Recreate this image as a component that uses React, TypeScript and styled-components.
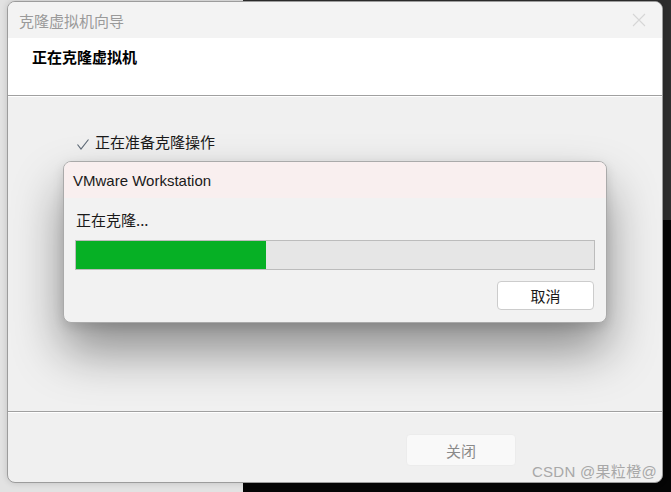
import React from 'react';
import styled, {createGlobalStyle} from "styled-components";

const GlobalStyle = createGlobalStyle`
    html, body {
        margin: 0;
        height: 100%;
    }
    body {
        background:
            linear-gradient(to right, #e2e2e2 0 243px, transparent 243px),
            linear-gradient(to bottom, #2d2d2d 0 220px, #050505 220px);
        font-family: "Liberation Sans", "Noto Sans CJK SC", sans-serif;
        overflow: hidden;
    }
`

const progress = 0.366;

export default function App() {
    return (
        <>
            <GlobalStyle/>
            <Desktop>
                <Wizard>
                    <TitleBar>
                        <TitleText>克隆虚拟机向导</TitleText>
                        <CloseIcon width="14" height="14" viewBox="0 0 14 14">
                            <path d="M1 1 L13 13 M13 1 L1 13" stroke="#d6d6d6" strokeWidth="1.1" fill="none"/>
                        </CloseIcon>
                    </TitleBar>
                    <Header>
                        <HeaderTitle>正在克隆虚拟机</HeaderTitle>
                    </Header>
                    <Body>
                        <StepList>
                            <Step>
                                <svg width="14" height="14" viewBox="0 0 14 14">
                                    <path d="M1.5 7.5 L5 12 L12.5 2.5" stroke="#5f6b78" strokeWidth="1.2" fill="none"/>
                                </svg>
                                <StepText>正在准备克隆操作</StepText>
                            </Step>
                        </StepList>
                    </Body>
                    <Footer>
                        <FooterButton disabled>关闭</FooterButton>
                    </Footer>
                    <Dialog>
                        <DialogTitle>VMware Workstation</DialogTitle>
                        <DialogBody>
                            <Status>正在克隆...</Status>
                            <ProgressTrack>
                                <ProgressFill style={{width: `${progress * 100}%`}}/>
                            </ProgressTrack>
                            <DialogActions>
                                <CancelButton>取消</CancelButton>
                            </DialogActions>
                        </DialogBody>
                    </Dialog>
                    <Watermark>CSDN @果粒橙@</Watermark>
                </Wizard>
            </Desktop>
        </>
    );
}

const Desktop = styled.div`
    padding: 1px 0 0 7px;
`

const Wizard = styled.div`
    position: relative;
    box-sizing: border-box;
    width: 656px;
    height: 482px;
    border: 1px solid #9c9c9c;
    border-radius: 8px;
    background: #f0f0f0;
    display: flex;
    flex-direction: column;
    overflow: hidden;
    box-shadow: 0 0 6px rgba(0, 0, 0, 0.15);
`

const TitleBar = styled.div`
    height: 36px;
    flex-shrink: 0;
    background: #f3f3f3;
    display: flex;
    align-items: center;
    justify-content: space-between;
    padding: 0 16px 0 11px;
`

const TitleText = styled.span`
    font-size: 15px;
    color: #9a9a9a;
    font-family: "Noto Sans CJK SC", sans-serif;
`

const CloseIcon = styled.svg`
    display: block;
`

const Header = styled.div`
    height: 58px;
    flex-shrink: 0;
    background: #fff;
    border-bottom: 1px solid #a0a0a0;
    box-shadow: 0 1px 0 #ffffff;
    padding: 8px 0 0 24px;
    box-sizing: border-box;
`

const HeaderTitle = styled.h1`
    margin: 0;
    font-size: 15px;
    line-height: 22px;
    font-weight: 700;
    color: #000;
    font-family: "Noto Sans CJK SC", sans-serif;
`

const Body = styled.div`
    flex: 1;
    padding: 34px 0 0 68px;
    margin-top: 1px;
`

const StepList = styled.ul`
    list-style: none;
    margin: 0;
    padding: 0;
`

const Step = styled.li`
    display: flex;
    align-items: center;
    gap: 5px;
    height: 20px;

    svg {
        margin-top: 5px;
    }
`

const StepText = styled.span`
    font-size: 15px;
    color: #1a1a1a;
    font-family: "Noto Sans CJK SC", sans-serif;
`

const Footer = styled.div`
    height: 71px;
    flex-shrink: 0;
    box-sizing: border-box;
    border-top: 1px solid #a0a0a0;
    box-shadow: inset 0 1px 0 #ffffff;
    display: flex;
    justify-content: flex-end;
    padding: 22px 146px 0 0;
`

const FooterButton = styled.button`
    width: 110px;
    height: 32px;
    border: 1px solid #ececec;
    border-radius: 4px;
    background: #f9f9f9;
    color: #8a8a8a;
    font-size: 15px;
    font-family: "Noto Sans CJK SC", sans-serif;
    padding: 0;
`

const Dialog = styled.div`
    position: absolute;
    left: 55px;
    top: 159px;
    width: 544px;
    height: 162px;
    box-sizing: border-box;
    border: 1px solid #aaaaaa;
    border-radius: 8px;
    background: #f2f2f2;
    overflow: hidden;
    box-shadow: 0 28px 50px rgba(0, 0, 0, 0.42), 0 4px 12px rgba(0, 0, 0, 0.12);
    display: flex;
    flex-direction: column;
`

const DialogTitle = styled.div`
    height: 36px;
    flex-shrink: 0;
    background: #f9efef;
    display: flex;
    align-items: center;
    padding-left: 9px;
    font-size: 15px;
    color: #1a1a1a;
`

const DialogBody = styled.div`
    padding: 12px 11px 0 11px;
    display: flex;
    flex-direction: column;
`

const Status = styled.div`
    font-size: 15px;
    line-height: 20px;
    color: #1a1a1a;
    padding-left: 1px;
    font-family: "Noto Sans CJK SC", sans-serif;
`

const ProgressTrack = styled.div`
    margin-top: 10px;
    height: 30px;
    box-sizing: border-box;
    border: 1px solid #bcbcbc;
    background: #e6e6e6;
`

const ProgressFill = styled.div`
    height: 100%;
    background: #06b025;
`

const DialogActions = styled.div`
    display: flex;
    justify-content: flex-end;
    margin-top: 11px;
    padding-right: 1px;
`

const CancelButton = styled.button`
    width: 97px;
    height: 29px;
    border: 1px solid #cccccc;
    border-radius: 4px;
    background: #ffffff;
    color: #1a1a1a;
    font-size: 15px;
    font-family: "Noto Sans CJK SC", sans-serif;
    padding: 0;
`

const Watermark = styled.span`
    position: absolute;
    right: 5px;
    bottom: 1px;
    font-size: 15px;
    color: #a8a8a8;
    font-family: "Liberation Sans", "Noto Sans CJK SC", sans-serif;
    letter-spacing: 0.3px;
`
